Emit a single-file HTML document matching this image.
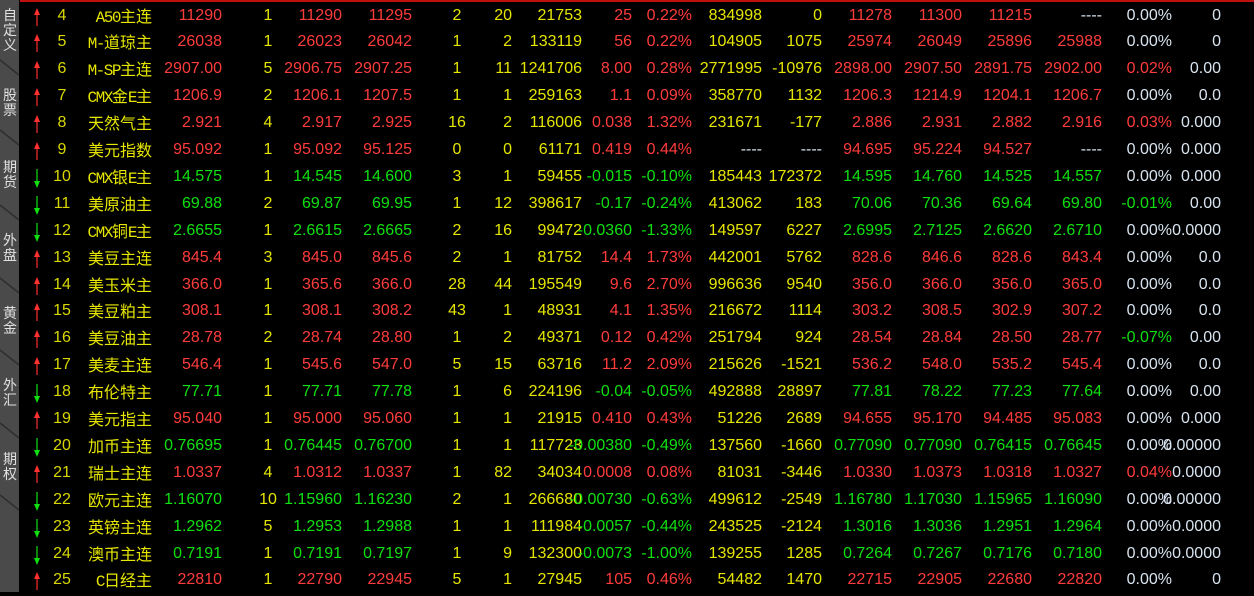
<!DOCTYPE html><html><head><meta charset="utf-8"><style>
body{margin:0;width:1254px;height:592px;background:#000;overflow:hidden;position:relative;font-family:"Liberation Sans","Noto Sans CJK SC",sans-serif;font-size:16px}
#sb{position:absolute;left:0;top:0;width:19px;height:592px;background:#4a4a4a}
.t{position:absolute;left:1px;width:18px;color:#e0e0e0;font-size:14px;line-height:15px;text-align:center;font-family:"Noto Sans CJK SC",sans-serif}
#top{position:absolute;left:20px;top:0;width:1234px;height:2px;background:#c01010}
.r{position:absolute;left:0;width:1254px;height:27px;line-height:27px}
.r span{position:absolute;white-space:nowrap;color:#e6e600}
.r i{font-style:normal;font-family:"Liberation Mono",monospace;font-size:16px;letter-spacing:-1.5px}
.u span{color:#ff3c3c}.d span{color:#10e010}
.r span:nth-child(2),.r span:nth-child(3),.r span:nth-child(5),.r span:nth-child(8),.r span:nth-child(9),.r span:nth-child(10),.r span:nth-child(13),.r span:nth-child(14){color:#e6e600}
.r span:nth-child(19),.r span:nth-child(20){color:#d8e4f0}
.r span.w{color:#d8e4f0}.r span.R{color:#ff3c3c}.r span.G{color:#10e010}
.r span:nth-child(2){left:42px;width:40px;text-align:center;color:#d8d800}
.r span:nth-child(3){right:1102px;font-family:"Noto Sans CJK SC",sans-serif;font-size:16px}
.r span:nth-child(4){right:1032px}
.r span:nth-child(5){left:248px;width:40px;text-align:center}
.r span:nth-child(6){right:912px}
.r span:nth-child(7){right:842px}
.r span:nth-child(8){left:437px;width:40px;text-align:center}
.r span:nth-child(9){right:742px}
.r span:nth-child(10){right:672px}
.r span:nth-child(11){right:622px}
.r span:nth-child(12){right:562px}
.r span:nth-child(13){right:492px}
.r span:nth-child(14){right:432px}
.r span:nth-child(15){right:362px}
.r span:nth-child(16){right:292px}
.r span:nth-child(17){right:222px}
.r span:nth-child(18){right:152px}
.r span:nth-child(19){right:82px}
.r span:nth-child(20){right:33px}
.r svg{position:absolute;left:32px;top:4px}
</style></head><body>
<div id="sb">
<svg width="19" height="592" style="position:absolute;left:0;top:0">
<g stroke="#2e2e2e" stroke-width="1.5" fill="none">
<path d="M0 60 L19 75"/><path d="M0 130 L19 145"/><path d="M0 205 L19 220"/><path d="M0 278 L19 293"/><path d="M0 350 L19 365"/><path d="M0 423 L19 438"/><path d="M0 495 L19 510"/>
</g></svg>
<div class="t" style="top:8px">自<br>定<br>义</div>
<div class="t" style="top:88px">股<br>票</div>
<div class="t" style="top:160px">期<br>货</div>
<div class="t" style="top:233px">外<br>盘</div>
<div class="t" style="top:306px">黄<br>金</div>
<div class="t" style="top:378px">外<br>汇</div>
<div class="t" style="top:452px">期<br>权</div>
</div>
<div id="top"></div>
<svg width="0" height="0" style="position:absolute"><defs>
<g id="up"><path d="M5 5 V20" stroke="#ff3030" stroke-width="1.2"/><path d="M2 9 L5 2 L8 9 Z" fill="#ff3030"/></g>
<g id="dn"><path d="M5 2 V17" stroke="#10e010" stroke-width="1.2"/><path d="M2 14 L5 21 L8 14 Z" fill="#10e010"/></g>
</defs></svg>

<div class="r u" style="top:1.5px"><svg width="10" height="22"><use href="#up"/></svg><span>4</span><span><i>A50</i>主连</span><span>11290</span><span>1</span><span>11290</span><span>11295</span><span>2</span><span>20</span><span>21753</span><span>25</span><span>0.22%</span><span>834998</span><span>0</span><span>11278</span><span>11300</span><span>11215</span><span class="w">----</span><span>0.00%</span><span>0</span></div>
<div class="r u" style="top:28.4px"><svg width="10" height="22"><use href="#up"/></svg><span>5</span><span><i>M-</i>道琼主</span><span>26038</span><span>1</span><span>26023</span><span>26042</span><span>1</span><span>2</span><span>133119</span><span>56</span><span>0.22%</span><span>104905</span><span>1075</span><span>25974</span><span>26049</span><span>25896</span><span>25988</span><span>0.00%</span><span>0</span></div>
<div class="r u" style="top:55.3px"><svg width="10" height="22"><use href="#up"/></svg><span>6</span><span><i>M-SP</i>主连</span><span>2907.00</span><span>5</span><span>2906.75</span><span>2907.25</span><span>1</span><span>11</span><span>1241706</span><span>8.00</span><span>0.28%</span><span>2771995</span><span>-10976</span><span>2898.00</span><span>2907.50</span><span>2891.75</span><span>2902.00</span><span class="R">0.02%</span><span>0.00</span></div>
<div class="r u" style="top:82.2px"><svg width="10" height="22"><use href="#up"/></svg><span>7</span><span><i>CMX</i>金<i>E</i>主</span><span>1206.9</span><span>2</span><span>1206.1</span><span>1207.5</span><span>1</span><span>1</span><span>259163</span><span>1.1</span><span>0.09%</span><span>358770</span><span>1132</span><span>1206.3</span><span>1214.9</span><span>1204.1</span><span>1206.7</span><span>0.00%</span><span>0.0</span></div>
<div class="r u" style="top:109.1px"><svg width="10" height="22"><use href="#up"/></svg><span>8</span><span>天然气主</span><span>2.921</span><span>4</span><span>2.917</span><span>2.925</span><span>16</span><span>2</span><span>116006</span><span>0.038</span><span>1.32%</span><span>231671</span><span>-177</span><span>2.886</span><span>2.931</span><span>2.882</span><span>2.916</span><span class="R">0.03%</span><span>0.000</span></div>
<div class="r u" style="top:136px"><svg width="10" height="22"><use href="#up"/></svg><span>9</span><span>美元指数</span><span>95.092</span><span>1</span><span>95.092</span><span>95.125</span><span>0</span><span>0</span><span>61171</span><span>0.419</span><span>0.44%</span><span class="w">----</span><span class="w">----</span><span>94.695</span><span>95.224</span><span>94.527</span><span class="w">----</span><span>0.00%</span><span>0.000</span></div>
<div class="r d" style="top:162.9px"><svg width="10" height="22"><use href="#dn"/></svg><span>10</span><span><i>CMX</i>银<i>E</i>主</span><span>14.575</span><span>1</span><span>14.545</span><span>14.600</span><span>3</span><span>1</span><span>59455</span><span>-0.015</span><span>-0.10%</span><span>185443</span><span>172372</span><span>14.595</span><span>14.760</span><span>14.525</span><span>14.557</span><span>0.00%</span><span>0.000</span></div>
<div class="r d" style="top:189.8px"><svg width="10" height="22"><use href="#dn"/></svg><span>11</span><span>美原油主</span><span>69.88</span><span>2</span><span>69.87</span><span>69.95</span><span>1</span><span>12</span><span>398617</span><span>-0.17</span><span>-0.24%</span><span>413062</span><span>183</span><span>70.06</span><span>70.36</span><span>69.64</span><span>69.80</span><span class="G">-0.01%</span><span>0.00</span></div>
<div class="r d" style="top:216.7px"><svg width="10" height="22"><use href="#dn"/></svg><span>12</span><span><i>CMX</i>铜<i>E</i>主</span><span>2.6655</span><span>1</span><span>2.6615</span><span>2.6665</span><span>2</span><span>16</span><span>99472</span><span>-0.0360</span><span>-1.33%</span><span>149597</span><span>6227</span><span>2.6995</span><span>2.7125</span><span>2.6620</span><span>2.6710</span><span>0.00%</span><span>0.0000</span></div>
<div class="r u" style="top:243.6px"><svg width="10" height="22"><use href="#up"/></svg><span>13</span><span>美豆主连</span><span>845.4</span><span>3</span><span>845.0</span><span>845.6</span><span>2</span><span>1</span><span>81752</span><span>14.4</span><span>1.73%</span><span>442001</span><span>5762</span><span>828.6</span><span>846.6</span><span>828.6</span><span>843.4</span><span>0.00%</span><span>0.0</span></div>
<div class="r u" style="top:270.5px"><svg width="10" height="22"><use href="#up"/></svg><span>14</span><span>美玉米主</span><span>366.0</span><span>1</span><span>365.6</span><span>366.0</span><span>28</span><span>44</span><span>195549</span><span>9.6</span><span>2.70%</span><span>996636</span><span>9540</span><span>356.0</span><span>366.0</span><span>356.0</span><span>365.0</span><span>0.00%</span><span>0.0</span></div>
<div class="r u" style="top:297.4px"><svg width="10" height="22"><use href="#up"/></svg><span>15</span><span>美豆粕主</span><span>308.1</span><span>1</span><span>308.1</span><span>308.2</span><span>43</span><span>1</span><span>48931</span><span>4.1</span><span>1.35%</span><span>216672</span><span>1114</span><span>303.2</span><span>308.5</span><span>302.9</span><span>307.2</span><span>0.00%</span><span>0.0</span></div>
<div class="r u" style="top:324.3px"><svg width="10" height="22"><use href="#up"/></svg><span>16</span><span>美豆油主</span><span>28.78</span><span>2</span><span>28.74</span><span>28.80</span><span>1</span><span>2</span><span>49371</span><span>0.12</span><span>0.42%</span><span>251794</span><span>924</span><span>28.54</span><span>28.84</span><span>28.50</span><span>28.77</span><span class="G">-0.07%</span><span>0.00</span></div>
<div class="r u" style="top:351.2px"><svg width="10" height="22"><use href="#up"/></svg><span>17</span><span>美麦主连</span><span>546.4</span><span>1</span><span>545.6</span><span>547.0</span><span>5</span><span>15</span><span>63716</span><span>11.2</span><span>2.09%</span><span>215626</span><span>-1521</span><span>536.2</span><span>548.0</span><span>535.2</span><span>545.4</span><span>0.00%</span><span>0.0</span></div>
<div class="r d" style="top:378.1px"><svg width="10" height="22"><use href="#dn"/></svg><span>18</span><span>布伦特主</span><span>77.71</span><span>1</span><span>77.71</span><span>77.78</span><span>1</span><span>6</span><span>224196</span><span>-0.04</span><span>-0.05%</span><span>492888</span><span>28897</span><span>77.81</span><span>78.22</span><span>77.23</span><span>77.64</span><span>0.00%</span><span>0.00</span></div>
<div class="r u" style="top:405px"><svg width="10" height="22"><use href="#up"/></svg><span>19</span><span>美元指主</span><span>95.040</span><span>1</span><span>95.000</span><span>95.060</span><span>1</span><span>1</span><span>21915</span><span>0.410</span><span>0.43%</span><span>51226</span><span>2689</span><span>94.655</span><span>95.170</span><span>94.485</span><span>95.083</span><span>0.00%</span><span>0.000</span></div>
<div class="r d" style="top:431.9px"><svg width="10" height="22"><use href="#dn"/></svg><span>20</span><span>加币主连</span><span>0.76695</span><span>1</span><span>0.76445</span><span>0.76700</span><span>1</span><span>1</span><span>117723</span><span>-0.00380</span><span>-0.49%</span><span>137560</span><span>-1660</span><span>0.77090</span><span>0.77090</span><span>0.76415</span><span>0.76645</span><span>0.00%</span><span>0.00000</span></div>
<div class="r u" style="top:458.8px"><svg width="10" height="22"><use href="#up"/></svg><span>21</span><span>瑞士主连</span><span>1.0337</span><span>4</span><span>1.0312</span><span>1.0337</span><span>1</span><span>82</span><span>34034</span><span>0.0008</span><span>0.08%</span><span>81031</span><span>-3446</span><span>1.0330</span><span>1.0373</span><span>1.0318</span><span>1.0327</span><span class="R">0.04%</span><span>0.0000</span></div>
<div class="r d" style="top:485.7px"><svg width="10" height="22"><use href="#dn"/></svg><span>22</span><span>欧元主连</span><span>1.16070</span><span>10</span><span>1.15960</span><span>1.16230</span><span>2</span><span>1</span><span>266680</span><span>-0.00730</span><span>-0.63%</span><span>499612</span><span>-2549</span><span>1.16780</span><span>1.17030</span><span>1.15965</span><span>1.16090</span><span>0.00%</span><span>0.00000</span></div>
<div class="r d" style="top:512.6px"><svg width="10" height="22"><use href="#dn"/></svg><span>23</span><span>英镑主连</span><span>1.2962</span><span>5</span><span>1.2953</span><span>1.2988</span><span>1</span><span>1</span><span>111984</span><span>-0.0057</span><span>-0.44%</span><span>243525</span><span>-2124</span><span>1.3016</span><span>1.3036</span><span>1.2951</span><span>1.2964</span><span>0.00%</span><span>0.0000</span></div>
<div class="r d" style="top:539.5px"><svg width="10" height="22"><use href="#dn"/></svg><span>24</span><span>澳币主连</span><span>0.7191</span><span>1</span><span>0.7191</span><span>0.7197</span><span>1</span><span>9</span><span>132300</span><span>-0.0073</span><span>-1.00%</span><span>139255</span><span>1285</span><span>0.7264</span><span>0.7267</span><span>0.7176</span><span>0.7180</span><span>0.00%</span><span>0.0000</span></div>
<div class="r u" style="top:566.4px"><svg width="10" height="22"><use href="#up"/></svg><span>25</span><span><i>C</i>日经主</span><span>22810</span><span>1</span><span>22790</span><span>22945</span><span>5</span><span>1</span><span>27945</span><span>105</span><span>0.46%</span><span>54482</span><span>1470</span><span>22715</span><span>22905</span><span>22680</span><span>22820</span><span>0.00%</span><span>0</span></div>
</body></html>
